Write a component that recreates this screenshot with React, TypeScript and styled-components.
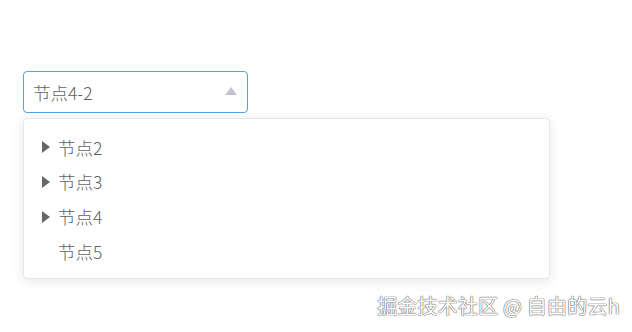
import React from "react";
import styled, { createGlobalStyle } from "styled-components";

const Global = createGlobalStyle`
  html, body { margin: 0; padding: 0; background: #fff; }
  body { font-family: "Noto Sans CJK SC", "Noto Sans", sans-serif; }
`;

const Page = styled.div`
  position: relative;
  width: 632px;
  height: 332px;
  padding: 71px 0 0 23px;
  box-sizing: border-box;
`;

const Select = styled.div`
  width: 225px;
  height: 42px;
  box-sizing: border-box;
  border: 1px solid #4ea6e6;
  border-radius: 4px;
  display: flex;
  align-items: center;
  padding: 0 9px 0 9px;
  justify-content: space-between;
`;

const Value = styled.span`
  font-size: 17.5px;
  font-weight: 300;
  color: #606266;
`;

const Arrow = styled.span`
  width: 0;
  height: 0;
  border-left: 6.5px solid transparent;
  border-right: 6.5px solid transparent;
  border-bottom: 8px solid #c0c4cc;
  margin-right: 1px;
  margin-top: -2px;
`;

const Dropdown = styled.div`
  margin-top: 5px;
  width: 527px;
  height: 161px;
  box-sizing: border-box;
  border: 1px solid #e4e7ed;
  border-radius: 4px;
  box-shadow: 0 2px 12px 0 rgba(0, 0, 0, 0.1);
  padding: 11px 0 9px;
  background: #fff;
`;

const Row = styled.div`
  height: 34.67px;
  display: flex;
  align-items: center;
  padding-left: 18px;
  font-size: 17.5px;
  font-weight: 300;
  color: #606266;
`;

const Caret = styled.span<{ $hidden?: boolean }>`
  width: 0;
  height: 0;
  border-top: 6px solid transparent;
  border-bottom: 6px solid transparent;
  border-left: 8px solid ${(p) => (p.$hidden ? "transparent" : "#666")};
  margin-right: 8px;
`;

const Watermark = styled.div`
  position: absolute;
  right: 12px;
  bottom: 12px;
  font-size: 20px;
  color: #fff;
  letter-spacing: 0.2px;
  text-shadow: 0 0 1px #666, 0 0 1px #666, 0 0 1px #666;
`;

const items = [
  { label: "节点2", children: true },
  { label: "节点3", children: true },
  { label: "节点4", children: true },
  { label: "节点5", children: false },
];

export default function App() {
  return (
    <Page>
      <Global />
      <Select>
        <Value>节点4-2</Value>
        <Arrow />
      </Select>
      <Dropdown>
        {items.map((it) => (
          <Row key={it.label}>
            <Caret $hidden={!it.children} />
            {it.label}
          </Row>
        ))}
      </Dropdown>
      <Watermark>掘金技术社区 @ 自由的云h</Watermark>
    </Page>
  );
}
